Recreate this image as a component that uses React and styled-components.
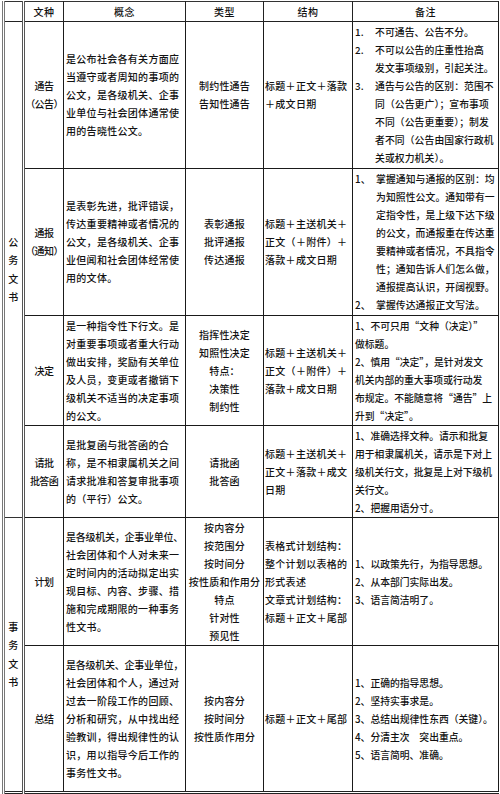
import React from "react";
import styled, { createGlobalStyle } from "styled-components";

const Global = createGlobalStyle`
  html, body { margin: 0; padding: 0; background: #fff; }
  body {
    font-family: "Noto Sans CJK SC", "Noto Sans", sans-serif;
    color: #121212;
  }
`;

const Sheet = styled.table`
  width: 495px;
  margin: 1px 0 0 2px;
  border-collapse: collapse;
  table-layout: fixed;
  font-size: 10px;
  letter-spacing: 0.4px;
  line-height: 18px;
  font-weight: 500;
  border-bottom: 3px double #222;
  border-right: 1.5px solid #222;
`;

const Row = styled.tr`
  height: ${(p) => p.$h}px;
`;

const Head = styled.th`
  border: 1px solid #222;
  border-top: 1.5px solid #333;
  font-weight: 500;
  text-align: center;
  vertical-align: middle;
  padding: 0;
  line-height: 18px;
`;

const Cell = styled.td`
  border: 1px solid #1a1a1a;
  padding: 0 ${(p) => p.$pad ?? 2}px;
  vertical-align: middle;
  text-align: ${(p) => (p.$center ? "center" : "left")};
  overflow: ${(p) => (p.$spill ? "visible" : "hidden")};
  letter-spacing: ${(p) => p.$ls ?? "inherit"};
  font-size: ${(p) => p.$fs ?? "inherit"};
`;

const CatCell = styled.td`
  border: 1px solid #333;
  border-left: 3px double #777;
  border-right: 3px double #555;
  text-align: center;
  vertical-align: middle;
  padding: 0;
  line-height: 18.5px;
`;

const CatHead = styled.th`
  border-left: 3px double #777;
  border-right: 3px double #555;
  border-top: 1.5px solid #333;
  border-bottom: 1px solid #222;
  padding: 0;
`;

const Line = styled.div`
  white-space: nowrap;
  letter-spacing: ${(p) => (p.$tight ? "-0.25px" : "inherit")};
`;

const Item = styled.div`
  display: grid;
  grid-template-columns: ${(p) => p.$num}px minmax(0, 1fr);
  letter-spacing: 0.1px;
`;

const Num = styled.span`
  white-space: nowrap;
`;

const Lines = ({ lines, fit = 99 }) =>
  lines.map((l, i) => (
    <Line key={i} $tight={l.length > fit}>
      {l}
    </Line>
  ));

const Notes = ({ notes }) => {
  if (notes.type === "hang") {
    return notes.items.map((it, i) => (
      <Item key={i} $num={notes.num}>
        <Num>{it.n}</Num>
        <div>
          <Lines lines={it.lines} />
        </div>
      </Item>
    ));
  }
  return <Lines lines={notes.lines} />;
};

const groups = [
  {
    cat: "公务文书",
    rows: [
      {
        h: 147,
        name: ["通告", "（公告）"],
        concept: [
          "是公布社会各有关方面应",
          "当遵守或者周知的事项的",
          "公文，是各级机关、企事",
          "业单位与社会团体通常使",
          "用的告晓性公文。",
        ],
        type: ["制约性通告", "告知性通告"],
        struct: ["标题＋正文＋落款", "＋成文日期"],
        notes: {
          type: "hang",
          num: 20,
          items: [
            { n: "1.", lines: ["不可通告、公告不分。"] },
            { n: "2.", lines: ["不可以公告的庄重性抬高", "发文事项级别，引起关注。"] },
            {
              n: "3.",
              lines: [
                "通告与公告的区别：范围不",
                "同（公告更广）；宣布事项",
                "不同（公告更重要）；制发",
                "者不同（公告由国家行政机",
                "关或权力机关）。",
              ],
            },
          ],
        },
      },
      {
        h: 147,
        name: ["通报", "（通知）"],
        concept: [
          "是表彰先进，批评错误，",
          "传达重要精神或者情况的",
          "公文，是各级机关、企事",
          "业但闻和社会团体经常使",
          "用的文体。",
        ],
        type: ["表彰通报", "批评通报", "传达通报"],
        struct: ["标题＋主送机关＋", "正文（＋附件）＋", "落款＋成文日期"],
        notes: {
          type: "hang",
          num: 21,
          items: [
            {
              n: "1、",
              lines: [
                "掌握通知与通报的区别：均",
                "为知照性公文。通知带有一",
                "定指令性，是上级下达下级",
                "的公文，而通报重在传达重",
                "要精神或者情况，不具指令",
                "性；通知告诉人们怎么做，",
                "通报提高认识，开阔视野。",
              ],
            },
            { n: "2、", lines: ["掌握传达通报正文写法。"] },
          ],
        },
      },
      {
        h: 110,
        name: ["决定"],
        concept: [
          "是一种指令性下行文。是",
          "对重要事项或者重大行动",
          "做出安排，奖励有关单位",
          "及人员，变更或者撤销下",
          "级机关不适当的决定事项",
          "的公文。",
        ],
        type: ["指挥性决定", "知照性决定", "特点：", "决策性", "制约性"],
        struct: ["标题＋主送机关＋", "正文（＋附件）＋", "落款＋成文日期"],
        notes: {
          type: "plain",
          lines: [
            "1、不可只用“文种（决定）”",
            "做标题。",
            "2、慎用“决定”，是针对发文",
            "机关内部的重大事项或行动发",
            "布规定。不能随意将“通告”上",
            "升到“决定”。",
          ],
        },
      },
      {
        h: 92,
        name: ["请批", "批答函"],
        concept: [
          "是批复函与批答函的合",
          "称，是不相隶属机关之间",
          "请求批准和答复审批事项",
          "的（平行）公文。",
        ],
        type: ["请批函", "批答函"],
        struct: ["标题＋主送机关＋", "正文＋落款＋成文", "日期"],
        notes: {
          type: "plain",
          lines: [
            "1、准确选择文种。请示和批复",
            "用于相隶属机关，请示是下对上",
            "级机关行文，批复是上对下级机",
            "关行文。",
            "2、把握用语分寸。",
          ],
        },
      },
    ],
  },
  {
    cat: "事务文书",
    rows: [
      {
        h: 128,
        name: ["计划"],
        concept: [
          "是各级机关，企事业单位、",
          "社会团体和个人对未来一",
          "定时间内的活动拟定出实",
          "现目标、内容、步骤、措",
          "施和完成期限的一种事务",
          "性文书。",
        ],
        type: ["按内容分", "按范围分", "按时间分", "按性质和作用分", "特点", "针对性", "预见性"],
        struct: ["表格式计划结构：", "整个计划以表格的", "形式表述", "文章式计划结构：", "标题＋正文＋尾部"],
        notes: {
          type: "plain",
          lines: ["1、以政策先行，为指导思想。", "2、从本部门实际出发。", "3、语言简洁明了。"],
        },
      },
      {
        h: 147,
        name: ["总结"],
        concept: [
          "是各级机关、企事业单位，",
          "社会团体和个人，通过对",
          "过去一阶段工作的回顾、",
          "分析和研究，从中找出经",
          "验教训，得出规律性的认",
          "识，用以指导今后工作的",
          "事务性文书。",
        ],
        type: ["按内容分", "按时间分", "按性质作用分"],
        struct: ["标题＋正文＋尾部"],
        notes: {
          type: "plain",
          lines: [
            "1、正确的指导思想。",
            "2、坚持实事求是。",
            "3、总结出规律性东西（关键）。",
            "4、分清主次　突出重点。",
            "5、语言简明、准确。",
          ],
        },
      },
    ],
  },
];

export default function App() {
  return (
    <>
      <Global />
      <Sheet>
        <colgroup>
          <col style={{ width: 20 }} />
          <col style={{ width: 40 }} />
          <col style={{ width: 122 }} />
          <col style={{ width: 78 }} />
          <col style={{ width: 89 }} />
          <col style={{ width: 146 }} />
        </colgroup>
        <thead>
          <Row $h={20}>
            <CatHead />
            <Head>文种</Head>
            <Head>概念</Head>
            <Head>类型</Head>
            <Head>结构</Head>
            <Head>备注</Head>
          </Row>
        </thead>
        <tbody>
          {groups.map((g) =>
            g.rows.map((r, i) => (
              <Row key={g.cat + i} $h={r.h}>
                {i === 0 && (
                  <CatCell rowSpan={g.rows.length}>
                    <Lines lines={g.cat.split("")} />
                  </CatCell>
                )}
                <Cell $center $pad={0} $spill $ls="-0.6px">
                  <Lines lines={r.name} />
                </Cell>
                <Cell $pad={2} $ls="0.3px">
                  <Lines lines={r.concept} fit={11} />
                </Cell>
                <Cell $center $pad={0} $ls="0.2px">
                  <Lines lines={r.type} />
                </Cell>
                <Cell $pad={1} $ls="0.3px">
                  <Lines lines={r.struct} />
                </Cell>
                <Cell $pad={2} $spill $ls="0px" $fs="9.8px">
                  <Notes notes={r.notes} />
                </Cell>
              </Row>
            ))
          )}
        </tbody>
      </Sheet>
    </>
  );
}
